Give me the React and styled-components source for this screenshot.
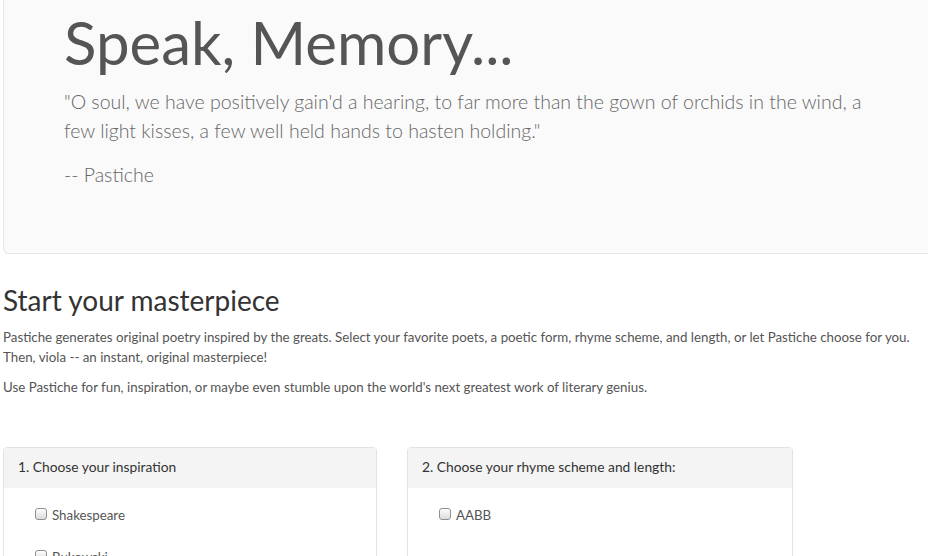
import React from "react";
import styled, { createGlobalStyle } from "styled-components";

const GlobalStyle = createGlobalStyle`
  html, body { margin: 0; padding: 0; overflow-x: hidden; background: #fff; }
  body {
    font-family: Lato, "Open Sans", "Noto Sans", sans-serif;
    font-size: 13.3px;
    line-height: 20px;
    color: #555;
  }
`;

const Page = styled.div`
  width: 940px;
  padding-left: 3px;
`;

const Jumbotron = styled.section`
  background: #fafafa;
  border: 1px solid #e7e7e7;
  border-top: none;
  border-radius: 0 0 6px 6px;
  padding: 9px 60px 49px;
`;

const Title = styled.h1`
  margin: 0 0 12px;
  font-size: 60px;
  line-height: 66px;
  font-weight: 400;
  color: #555;
`;

const Lead = styled.p`
  margin: 0 0 15px;
  font-size: 19.5px;
  line-height: 29px;
  font-weight: 300;
  color: #666;
`;

const Heading = styled.h2`
  margin: 31px 0 11px;
  font-size: 28px;
  line-height: 30.8px;
  font-weight: 400;
  color: #333;
`;

const Text = styled.p`
  margin: 0 0 10px;
`;

const Panels = styled.div`
  display: grid;
  grid-template-columns: 374px 386px;
  column-gap: 30px;
  margin-top: 50px;
`;

const Panel = styled.div`
  border: 1px solid #e3e3e3;
  border-radius: 4px;
  background: #fff;
  overflow: hidden;
`;

const PanelHeading = styled.div`
  background: #f4f4f4;
  padding: 9px 14px 11px;
  font-size: 13.8px;
  color: #333;
`;

const PanelBody = styled.div`
  padding: 17px 15px 15px 31px;
  display: flex;
  flex-direction: column;
  gap: 22px;
`;

const Option = styled.label`
  display: flex;
  align-items: flex-start;
  gap: 5px;
  height: 20px;
  color: #555;
`;

const Box = styled.input.attrs({ type: "checkbox" })`
  appearance: none;
  -webkit-appearance: none;
  margin: 3px 0 0;
  width: 12px;
  height: 12px;
  box-sizing: border-box;
  border: 1px solid #8f8f8f;
  border-radius: 3px;
  background: linear-gradient(#fdfdfd, #dcdcdc);
  box-shadow: inset 0 1px 0 #fff;
`;

const poets = ["Shakespeare", "Bukowski"];
const schemes = ["AABB"];

export default function App() {
  return (
    <>
      <GlobalStyle />
      <Page>
        <Jumbotron>
          <Title>Speak, Memory...</Title>
          <Lead>
            "O soul, we have positively gain'd a hearing, to far more than the gown of orchids in the wind, a few light kisses, a few well held hands to hasten holding."
          </Lead>
          <Lead>-- Pastiche</Lead>
        </Jumbotron>

        <Heading>Start your masterpiece</Heading>
        <Text>
          Pastiche generates original poetry inspired by the greats. Select your favorite poets, a poetic form, rhyme scheme, and length, or let Pastiche choose for you. Then, viola -- an instant, original masterpiece!
        </Text>
        <Text>
          Use Pastiche for fun, inspiration, or maybe even stumble upon the world's next greatest work of literary genius.
        </Text>

        <Panels>
          <Panel>
            <PanelHeading>1. Choose your inspiration</PanelHeading>
            <PanelBody>
              {poets.map((p) => (
                <Option key={p}>
                  <Box />
                  {p}
                </Option>
              ))}
            </PanelBody>
          </Panel>
          <Panel>
            <PanelHeading>2. Choose your rhyme scheme and length:</PanelHeading>
            <PanelBody>
              {schemes.map((s) => (
                <Option key={s}>
                  <Box />
                  {s}
                </Option>
              ))}
            </PanelBody>
          </Panel>
        </Panels>
      </Page>
    </>
  );
}
